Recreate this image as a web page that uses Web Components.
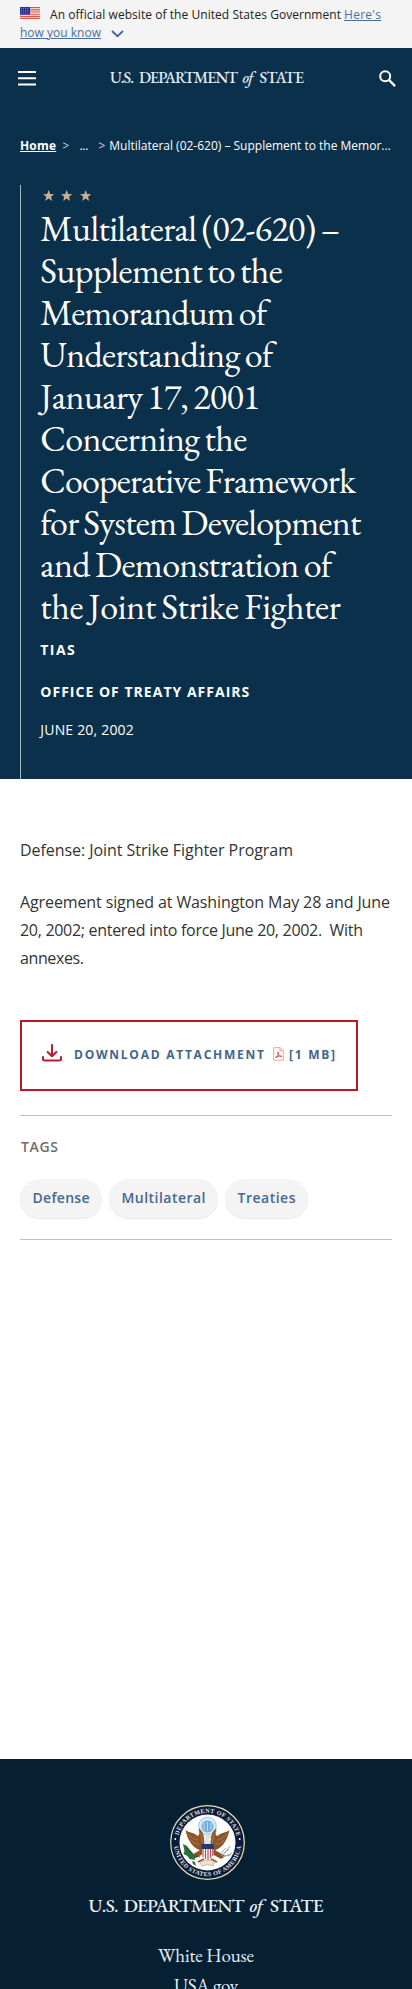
<!DOCTYPE html>
<html lang="en">
<head>
<meta charset="utf-8">
<title>Multilateral (02-620) - United States Department of State</title>
<style>
html,body{margin:0;padding:0}
body{width:412px;height:1989px;overflow:hidden;background:#fff;font-family:"Open Sans",sans-serif;color:#333}
</style>
</head>
<body>
<state-page></state-page>
<script>
const define = (name, html) => customElements.define(name, class extends HTMLElement {
  constructor() {
    super();
    this.attachShadow({mode: 'open'}).innerHTML = html;
  }
});

define('state-page', `
<style>
:host{display:flex;flex-direction:column;height:1989px;overflow:hidden}
main{height:980px}
.top{background:#0b304c;height:731px}
</style>
<gov-banner></gov-banner>
<div class="top">
  <site-header></site-header>
  <bread-crumbs></bread-crumbs>
  <article-hero></article-hero>
</div>
<main>
  <article-body></article-body>
  <download-card></download-card>
  <tag-list></tag-list>
</main>
<site-footer></site-footer>`);

define('gov-banner', `
<style>
:host{display:block;box-sizing:border-box;height:48px;padding:6px 20px;background:#f4f4f4;font-size:12px;line-height:18px;color:#222}
.row{display:flex;height:18px}
.flag{margin:1px 10px 0 0;display:block}
.link{color:#4a6f9e;text-decoration:underline;text-underline-offset:1px}
.here{margin-left:3px}
.chev{margin:6px 0 0 10px}
</style>
<div class="row">
  <svg class="flag" width="20" height="12" viewBox="0 0 20 12">
    <rect width="20" height="12" fill="#fbeeee"/>
    <path d="M0 .6h20M0 2.8h20M0 5h20M0 7.2h20M0 9.3h20M0 11.4h20" stroke="#dc5348" stroke-width="1.15"/>
    <rect width="10" height="7.6" fill="#27349a"/>
    <path d="M1 1.5h8M1 3.7h8M1 5.9h8" stroke="#8f97d8" stroke-width=".7" stroke-dasharray="1 1"/>
  </svg>
  <fit-text w="291">An official website of the United States Government</fit-text>
  <fit-text w="37" class="link here">Here's</fit-text>
</div>
<div class="row">
  <fit-text w="81" class="link">how you know</fit-text>
  <svg class="chev" width="13" height="8" viewBox="0 0 13 8"><path d="M1 1l5.5 5.200L12 1" fill="none" stroke="#3f6796" stroke-width="1.8"/></svg>
</div>`);

/* Department wordmark; the widths of its four words come in "w". */
define('word-mark', `
<style>
:host{display:flex;font-family:"EB Garamond","Liberation Serif",serif;font-weight:500;white-space:nowrap}
</style>
<slot></slot>`);

define('site-header', `
<style>
:host{display:flex;align-items:flex-start;justify-content:space-between;box-sizing:border-box;height:88px;padding:22px 16px 0 18px}
.menu{margin-top:1px}
word-mark{font-size:16px;line-height:18px;color:#e3f0fa;margin:-1px 0 0 -1px}
i{font-style:italic;margin:0 6px 0 4.500px}
.dept{margin-left:5px}
</style>
<svg class="menu" width="18" height="15" viewBox="0 0 18 15"><path d="M0 1h18M0 7.200h18M0 13.500h18" stroke="#fff" stroke-width="2"/></svg>
<word-mark><fit-text w="24">U.S.</fit-text><fit-text class="dept" w="99">DEPARTMENT</fit-text><i><fit-text w="11">of</fit-text></i><fit-text w="44.5">STATE</fit-text></word-mark>
<svg width="17" height="17" viewBox="0 0 17 17" fill="none" stroke="#fff"><circle cx="6.2" cy="6.2" r="5" stroke-width="2"/><path d="M9.900 9.900l6.200 6.200" stroke-width="2.3"/></svg>`);

define('bread-crumbs', `
<style>
:host{display:flex;box-sizing:border-box;height:49px;padding:0 20px;font-size:12px;line-height:20px;color:#fff}
.home{font-weight:700;text-decoration:underline;text-underline-offset:1px;margin-right:6.500px}
.s1{margin-right:10px}.dots{margin-right:10px}.s2{margin-right:4px}
.s1,.s2{color:#ccdae5}
</style>
<fit-text w="36" class="home">Home</fit-text><span class="s1">&gt;</span><fit-text w="9" class="dots">...</fit-text><span class="s2">&gt;</span><fit-text w="281.5">Multilateral (02-620) – Supplement to the Memor...</fit-text>`);

define('article-hero', `
<style>
:host{display:block;box-sizing:border-box;margin-left:20px;padding-left:19.300px;height:594px;border-left:1px solid #a7b8bd;color:#fff}
.stars{display:flex;gap:7px;padding:5px 0 0 2.700px;height:18px}
h1{margin:0;font:400 36px/42px "EB Garamond","Liberation Serif",serif;word-spacing:-1.500px}
h1 span{display:block;height:42px}
.meta{font-size:14px;line-height:20px;height:20px}
b{font-weight:700}
</style>
<div class="stars"><star-icon></star-icon><star-icon></star-icon><star-icon></star-icon></div>
<h1>
<span><fit-text w="300">Multilateral (02-620) –</fit-text></span>
<span><fit-text w="242.5">Supplement to the</fit-text></span>
<span><fit-text w="227">Memorandum of</fit-text></span>
<span><fit-text w="233">Understanding of</fit-text></span>
<span><fit-text w="220">January 17, 2001</fit-text></span>
<span><fit-text w="207">Concerning the</fit-text></span>
<span><fit-text w="315.5">Cooperative Framework</fit-text></span>
<span><fit-text w="321">for System Development</fit-text></span>
<span><fit-text w="292">and Demonstration of</fit-text></span>
<span><fit-text w="300.5">the Joint Strike Fighter</fit-text></span>
</h1>
<div class="meta" style="margin-top:12px"><b><fit-text w="34.5">TIAS</fit-text></b></div>
<div class="meta" style="margin-top:22px"><b><fit-text w="209">OFFICE OF TREATY AFFAIRS</fit-text></b></div>
<div class="meta" style="margin-top:18px"><fit-text w="93.5">JUNE 20, 2002</fit-text></div>`);

define('star-icon', `
<style>:host{display:block;width:11.3px;height:12px}svg{display:block}</style>
<svg width="11.3" height="11" viewBox="0 0 22 21"><path d="M11 0l2.900 7.600 8.100.4-6.300 5.100 2.100 7.900-6.800-4.500L4.200 21l2.100-7.900L0 8l8.100-.4z" fill="#c9ae93"/></svg>`);

define('article-body', `
<style>
:host{display:block;padding:57px 20px 0;height:136px;font-size:16px;line-height:28px;color:#333}
p{margin:0 0 24px}
p span{display:block;height:28px}
</style>
<p><span><fit-text w="273">Defense: Joint Strike Fighter Program</fit-text></span></p>
<p><span><fit-text w="370">Agreement signed at Washington May 28 and June</fit-text></span>
<span><fit-text w="343">20, 2002; entered into force June 20, 2002.&nbsp; With</fit-text></span>
<span><fit-text w="64">annexes.</fit-text></span></p>`);

define('download-card', `
<style>
:host{display:flex;box-sizing:border-box;margin:48px 0 0 20px;width:338px;height:71px;border:2px solid #be1523;padding:23px 0 0 20px;color:#41658f;font-size:12px;font-weight:700;line-height:20px}
.pdf{margin:2px 5px 0 9px}
.dl{margin:-1px 12px 0 0}
</style>
<svg class="dl" width="20" height="18" viewBox="0 0 20 18" fill="none" stroke="#ba1b2b" stroke-width="2" stroke-linecap="round" stroke-linejoin="round"><path d="M10 1v11M5.600 8l4.400 4.200L14.400 8M1 13v2.200Q1 16.500 2.500 16.500h15q1.500 0 1.500-1.300V13"/></svg>
<fit-text w="190">DOWNLOAD ATTACHMENT</fit-text>
<svg class="pdf" width="11" height="14" viewBox="0 0 11 14" fill="none"><path d="M.7.7h6.600l3 3v9.600H.7zM7 .7v3.200h3.300" stroke="#e3aaa0" stroke-width="1"/><path d="M2.500 10.500C5 9.500 6 6.500 5.200 5c-1.200-.2-.2 4 3.600 4.500C7 8.600 4 9.300 2.500 10.500z" stroke="#d84b3e" stroke-width="1"/></svg>
<fit-text w="46">[1 MB]</fit-text>`);

define('tag-list', `
<style>
:host{display:block;box-sizing:border-box;margin:24px 20px 0;height:125px;border-top:1px solid #bdbdbd;border-bottom:1px solid #bdbdbd;padding-top:21px;font-size:14px;font-weight:600}
.label{line-height:20px;height:20px;color:#6d6d6d;padding-left:1px}
.tags{display:flex;gap:7px;margin-top:22px}
</style>
<div class="label"><fit-text w="37">TAGS</fit-text></div>
<div class="tags">
<tag-pill style="width:82px"><fit-text w="57">Defense</fit-text></tag-pill>
<tag-pill style="width:109px"><fit-text w="84">Multilateral</fit-text></tag-pill>
<tag-pill style="width:83px"><fit-text w="58">Treaties</fit-text></tag-pill>
</div>`);

define('tag-pill', `
<style>
:host{display:flex;justify-content:center;box-sizing:border-box;height:39px;border-radius:20px;background:#f4f4f4;box-shadow:0 1px 1px #e8e8e8;color:#466791;line-height:38px}
</style><slot></slot>`);

define('site-footer', `
<style>
:host{display:flex;flex-direction:column;align-items:center;box-sizing:border-box;height:230px;overflow:hidden;background:#071f33;padding:46px 0 0;flex:none;color:#e0f1fb;font-family:"EB Garamond","Liberation Serif",serif}
state-seal{margin-left:2px}
word-mark{font-size:19px;line-height:24px;height:24px;margin-top:14px;color:#e6f3fc}
i{font-style:italic;margin:0 7px 0 5px}
.dept{margin-left:5px}
a{display:block;height:30px;line-height:30px;font-size:19px}
nav{margin-top:23px;display:flex;flex-direction:column;align-items:center}
</style>
<state-seal></state-seal>
<word-mark><fit-text w="30">U.S.</fit-text><fit-text class="dept" w="121">DEPARTMENT</fit-text><i><fit-text w="13.5">of</fit-text></i><fit-text w="53.5">STATE</fit-text></word-mark>
<nav><a><fit-text w="96">White House</fit-text></a><a><fit-text w="64">USA.gov</fit-text></a></nav>`);

define('state-seal', `
<style>:host{display:block;width:75px;height:75px}svg{display:block}text{font:600 6.100px "Liberation Serif",serif;fill:#e9e7d4}</style>
<svg width="75" height="75" viewBox="0 0 75 75">
<defs><path id="up" d="M7.800 37.500a29.700 29.700 0 0 1 59.400 0"/><path id="dn" d="M3.800 37.500a33.700 33.700 0 0 0 67.400 0"/></defs>
<circle cx="37.500" cy="37.500" r="36.800" fill="#0b1a3e" stroke="#e4e2b4" stroke-width="1.200"/>
<circle cx="37.500" cy="37.500" r="28" fill="#fff"/>
<text textLength="80"><textPath href="#up" startOffset="7">DEPARTMENT OF STATE</textPath></text>
<text textLength="98"><textPath href="#dn" startOffset="4">UNITED STATES OF AMERICA</textPath></text>
<circle cx="5.300" cy="34" r=".9" fill="#fff"/><circle cx="69.700" cy="34" r=".9" fill="#fff"/>
<circle cx="37.500" cy="21" r="8.800" fill="#d7eaf8" stroke="#8dbce2" stroke-width=".8"/>
<circle cx="37.500" cy="21.500" r="6" fill="#75addd"/>
<path d="M34 18v7M37.500 17v9M41 18v7" stroke="#c9e4f7" stroke-width=".9"/>
<path d="M32 46C25 44 18 38 15.500 25c4 3 8 2 12 6 2.500-1 2-4 1-8 4 3 5.500 7 5.500 11l1 7zM43 46c7-2 14-8 16.500-21-4 3-8 2-12 6-2.500-1-2-4-1-8-4 3-5.500 7-5.500 11l-1 7z" fill="#8c5428"/>
<path d="M28.500 26c3 4 4 8 4 13M46.500 26c-3 4-4 8-4 13M18 29c3 4 6 5 10 6M57 29c-3 4-6 5-10 6M20.500 35c3 3 5 4 9 4M54.500 35c-3 3-5 4-9 4" stroke="#bb8651" stroke-width=".7" fill="none"/>
<path d="M34.500 39V33q0-3 3-3.300 2.600.1 3.500 2l-2 .7 1.500 6.600z" fill="#dfe3e6"/><path d="M39.800 31.200l2.500.8-2.500.9z" fill="#d9a33b"/>
<path d="M33 48l-9 5-3-2 11-6M42 48l9 5 3-2-11-6M34 54l-6 3M41 54l6 3" fill="#8c5428" stroke="#8c5428" stroke-width="1.600"/>
<path d="M32 40h11.500v9.500q-1.500 4-5.700 5.500Q33.500 53.500 32 49.500z" fill="#fff"/>
<path d="M33 43v9M35.500 43v11M38 43v12M40.500 43v10M42.800 43v8" stroke="#c34a58" stroke-width="1.200"/>
<path d="M31.600 39h12.300v5H31.600z" fill="#27386c"/>
<path d="M13 39l4 2 3 4 3 3-.5 3 3 4-6-1-2-3-4-2 1-3zM22 56l3 1 1 4-3-2z" fill="#2b6d3d"/>
<path d="M24 51l6 1M17 43l8 9" stroke="#24522f" stroke-width=".8"/>
<path d="M51 51l8-7M53 52l9-4M54 49l6-8M50 49l6-6M55 51l6-1" stroke="#a3a8ab" stroke-width="1"/>
<path d="M30 57q8-4 15 0l-2 4q-5-3-11 0z" fill="#ece2cf" stroke="#b6a58d" stroke-width=".7"/>
</svg>`);

/* One line of text, tracked so that it fills the width given in "w". */
customElements.define('fit-text', class extends HTMLElement {
  constructor() {
    super();
    this.attachShadow({mode: 'open'}).innerHTML =
      '<style>:host{display:inline-block;white-space:nowrap;flex:none}</style><slot></slot>';
  }
  connectedCallback() {
    const target = parseFloat(this.getAttribute('w'));
    const n = this.textContent.length - 1;
    const natural = this.getBoundingClientRect().width;
    this.style.letterSpacing = (target - natural) / n + 'px';
    this.style.width = target + 'px';
  }
});
</script>
</body>
</html>
